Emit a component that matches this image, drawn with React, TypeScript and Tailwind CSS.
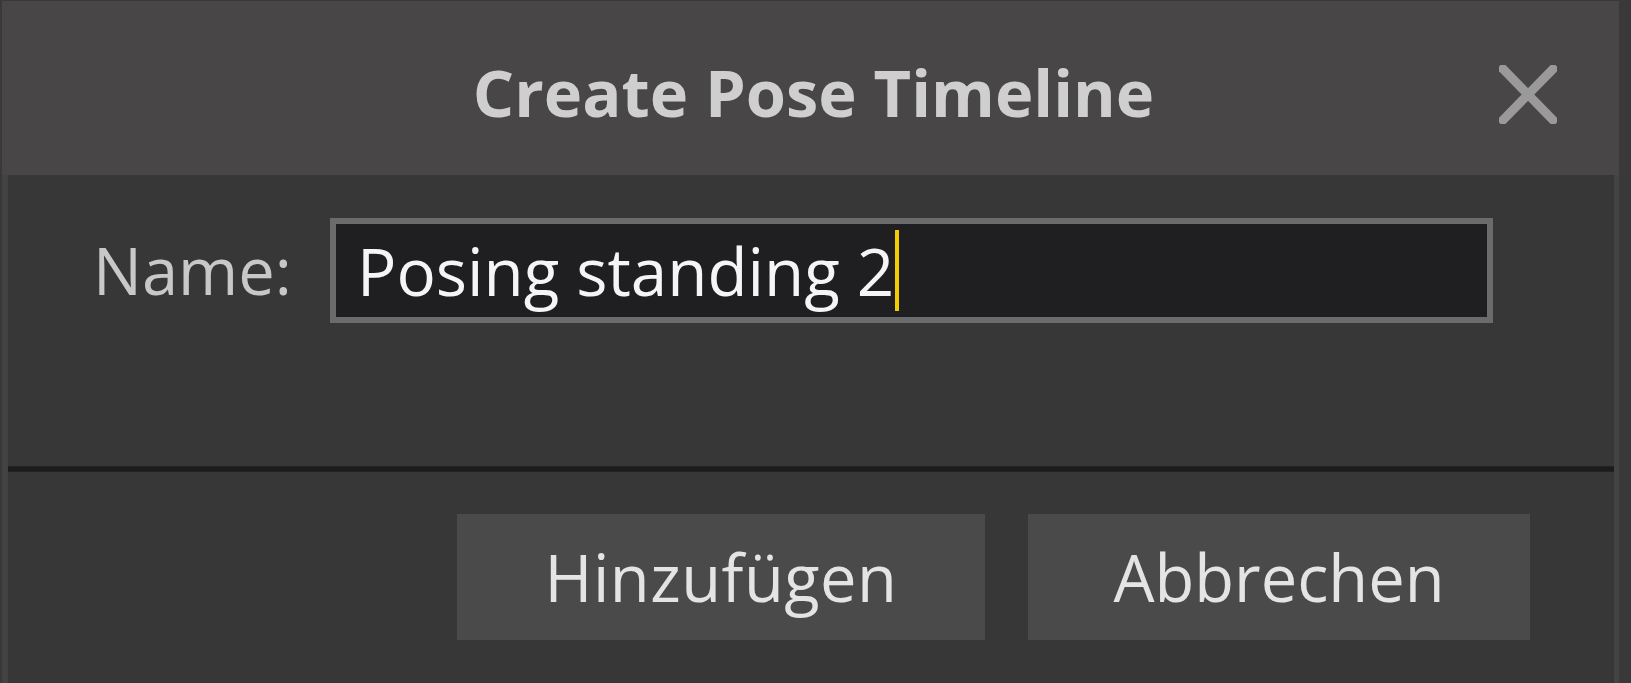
import React from "react";

const font = { fontFamily: '"Open Sans", "Noto Sans", sans-serif' };

export default function App() {
  return (
    <div className="w-[1631px] h-[683px] bg-[#393939] pt-[1px] pl-[2px] overflow-hidden" style={font}>
      <div className="w-[1617px] h-[682px] bg-[#434343] flex flex-col">
        {/* Title bar */}
        <div className="h-[174px] bg-[#484647] grid grid-cols-[1fr_auto_1fr] items-center pt-[8px] shrink-0">
          <div />
          <div className="ml-[6px] text-[65px] leading-[66px] font-bold text-[#cfcfcf] whitespace-nowrap">
            Create Pose Timeline
          </div>
          <div className="flex justify-end pr-[62px] pt-[4px]">
            <svg width="58" height="59" viewBox="0 0 58 59">
              <line x1="4" y1="4" x2="54" y2="55" stroke="#9a9a9a" strokeWidth="9" strokeLinecap="square" />
              <line x1="54" y1="4" x2="4" y2="55" stroke="#9a9a9a" strokeWidth="9" strokeLinecap="square" />
            </svg>
          </div>
        </div>
        {/* Body */}
        <div className="flex-1 ml-[6px] mr-[5px] bg-[#373737] flex flex-col">
          <div className="flex items-center pt-[43px] pl-[85px]">
            <div className="w-[237px] text-[65px] leading-[65px] text-[#c8c8c8] whitespace-nowrap">Name:</div>
            <div className="w-[1163px] h-[105px] border-[6px] border-[#6b6b6b] bg-[#1f1f21] flex items-center pl-[21px]">
              <span className="text-[65.5px] leading-[65px] text-[#f5f5f5] whitespace-nowrap">Posing standing 2</span>
              <span className="ml-[1px] w-[4px] h-[81px] bg-[#f2cc00]" />
            </div>
          </div>
          <div className="mt-[143px] h-[6px] bg-[#1c1c1c] border-y border-[#232323]" />
          <div className="flex justify-end gap-[43px] pr-[84px] mt-[42px]">
            <div className="w-[528px] h-[126px] bg-[#4a4a4a] flex items-center justify-center text-[65px] leading-[65px] tracking-[0.5px] text-[#e4e4e4]">
              Hinzufügen
            </div>
            <div className="w-[502px] h-[126px] bg-[#4a4a4a] flex items-center justify-center text-[65px] leading-[65px] text-[#e4e4e4]">
              Abbrechen
            </div>
          </div>
        </div>
      </div>
    </div>
  );
}
